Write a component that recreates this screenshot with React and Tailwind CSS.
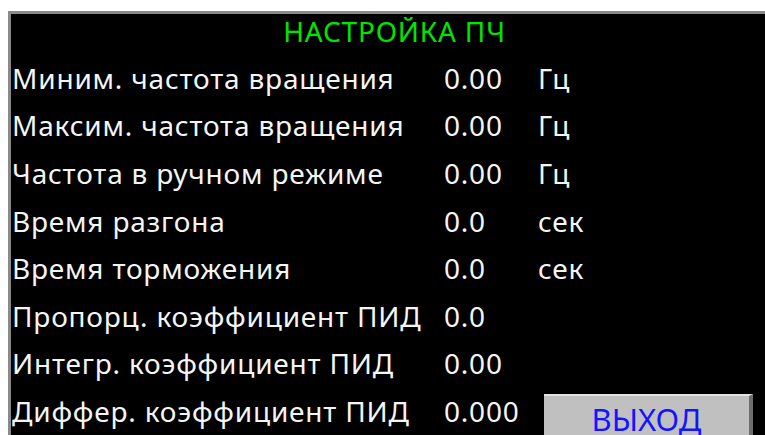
const rows = [
  { label: "Миним. частота вращения", value: "0.00", unit: "Гц" },
  { label: "Максим. частота вращения", value: "0.00", unit: "Гц" },
  { label: "Частота в ручном режиме", value: "0.00", unit: "Гц" },
  { label: "Время разгона", value: "0.0", unit: "сек" },
  { label: "Время торможения", value: "0.0", unit: "сек" },
  { label: "Пропорц. коэффициент ПИД", value: "0.0", unit: "" },
  { label: "Интегр. коэффициент ПИД", value: "0.00", unit: "" },
];

function Row({ label, value, children }) {
  return (
    <div className="flex h-[47.6px] items-center">
      <span className="w-[432px] whitespace-nowrap">{label}</span>
      <span className="w-[94px]">{value}</span>
      {children}
    </div>
  );
}

export default function App() {
  return (
    <div className="h-[435px] w-[765px] overflow-hidden bg-white pl-2 pt-[11px]">
      <div
        className="h-[440px] border-l-[3px] border-t-[3px] border-[#8a8a8a] bg-black pl-px pt-[2px] text-[28px] tracking-[0.8px] text-[#f4f4f4]"
        style={{ fontFamily: '"Noto Sans", "DejaVu Sans", sans-serif' }}
      >
        <div className="flex h-[38px] justify-center pt-[1px] leading-none text-[#00e400]">
          <span className="ml-[12px]">НАСТРОЙКА ПЧ</span>
        </div>
        <div>
          {rows.map((r) => (
            <Row key={r.label} label={r.label} value={r.value}>
              <span>{r.unit}</span>
            </Row>
          ))}
          <Row label="Диффер. коэффициент ПИД" value="0.000">
            <button
              type="button"
              className="ml-[6px] mt-[7px] h-[60px] w-[209px] self-start border-t-2 border-r-4 border-t-[#e4e4e4] border-r-[#6e6e6e] bg-[#c0c0c0] pb-4 text-[31px] tracking-normal text-[#1414ff]"
            >
              ВЫХОД
            </button>
          </Row>
        </div>
      </div>
    </div>
  );
}
